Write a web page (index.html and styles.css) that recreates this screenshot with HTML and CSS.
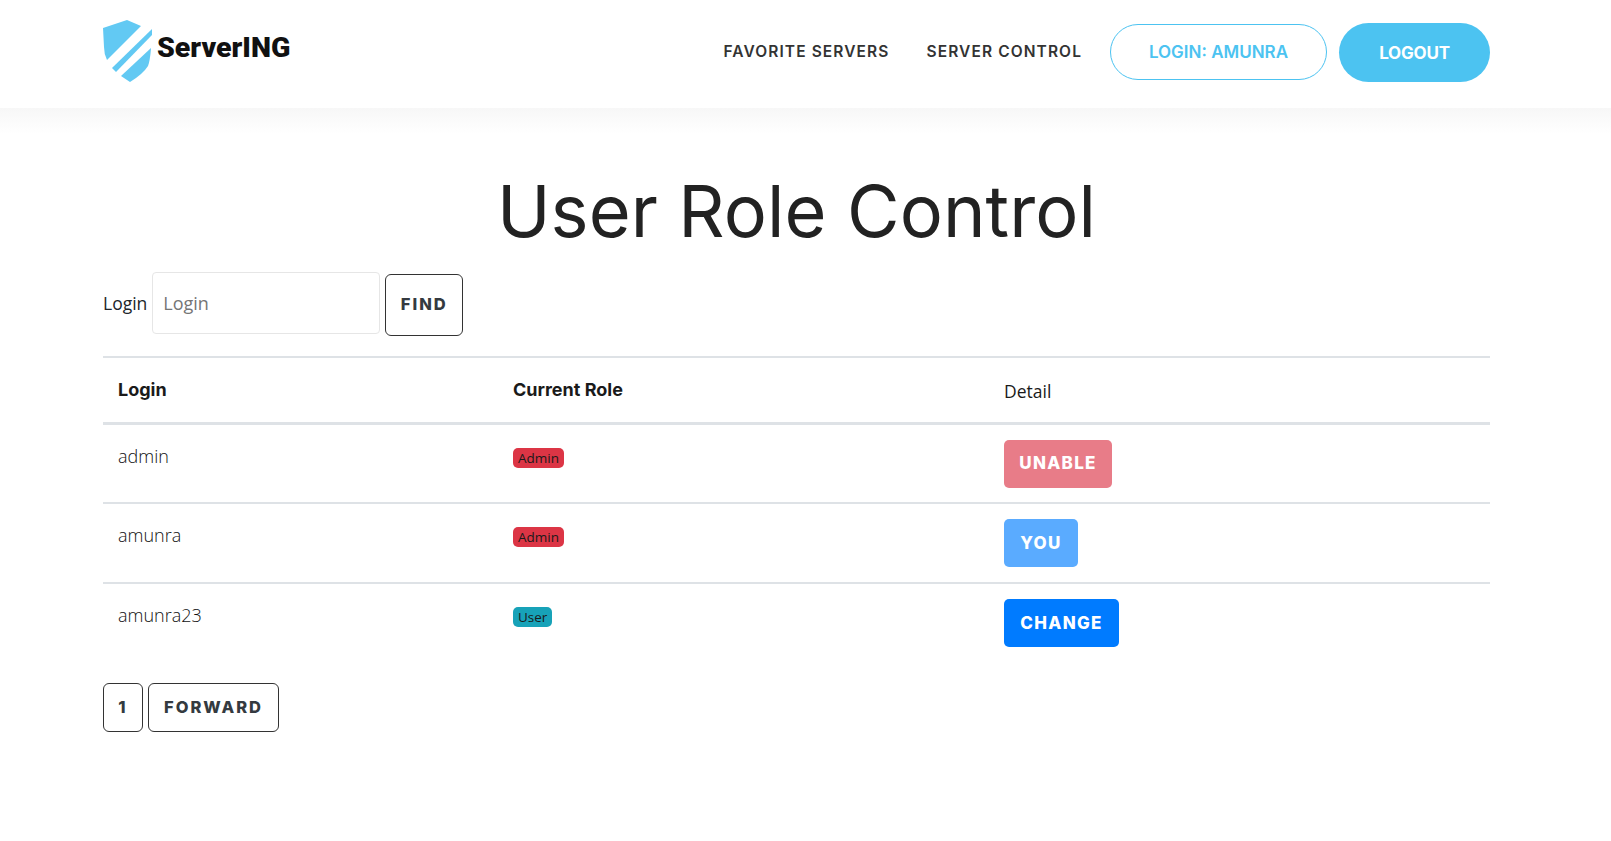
FILE: index.html
```html
<!DOCTYPE html>
<html lang="en">
<head>
<meta charset="utf-8">
<title>User Role Control</title>
<link rel="stylesheet" href="styles.css">
</head>
<body>
<header class="site-header">
  <div class="header-inner">
    <a class="brand" href="#">
      <svg class="brand-mark" viewBox="0 1 50 63" aria-hidden="true">
        <path d="M0 9 L24 1 L38 7 L4 41 Q1 35 1 28 Z"/>
        <path d="M49 10 L49 16 L13 53 L9 49 Z"/>
        <path d="M48 29 Q47 42 45 47 Q40 55 27 63 L18 57 Z"/>
      </svg>
      <span class="brand-name">ServerING</span>
    </a>
    <nav class="nav">
      <a class="nav-link" href="#">FAVORITE SERVERS</a>
      <a class="nav-link" href="#">SERVER CONTROL</a>
    </nav>
    <a class="pill pill-outline" href="#">LOGIN: AMUNRA</a>
    <a class="pill pill-solid" href="#">LOGOUT</a>
  </div>
</header>
<div class="band"></div>
<main class="content">
  <h1 class="title">User Role Control</h1>
  <form class="search">
    <label class="search-label" for="login">Login</label>
    <input class="search-input" id="login" type="text" placeholder="Login">
    <button class="btn-outline btn-find" type="button">FIND</button>
  </form>
  <table class="roles">
    <thead>
      <tr>
        <th class="col-login">Login</th>
        <th class="col-role">Current Role</th>
        <th class="col-detail">Detail</th>
      </tr>
    </thead>
    <tbody>
      <tr>
        <td>admin</td>
        <td><span class="badge badge-danger">Admin</span></td>
        <td><button class="btn btn-unable" type="button">UNABLE</button></td>
      </tr>
      <tr>
        <td>amunra</td>
        <td><span class="badge badge-danger">Admin</span></td>
        <td><button class="btn btn-you" type="button">YOU</button></td>
      </tr>
      <tr>
        <td>amunra23</td>
        <td><span class="badge badge-info">User</span></td>
        <td><button class="btn btn-change" type="button">CHANGE</button></td>
      </tr>
    </tbody>
  </table>
  <div class="pager">
    <button class="btn-outline btn-page" type="button">1</button>
    <button class="btn-outline btn-forward" type="button">FORWARD</button>
  </div>
</main>
</body>
</html>
```
FILE: styles.css
```css
* { box-sizing: border-box; }
html, body { margin: 0; padding: 0; }
body {
  background: #fff;
  color: #212529;
  font-family: "Open Sans", "Liberation Sans", sans-serif;
  font-size: 18px;
}
a { text-decoration: none; color: inherit; }

.site-header { height: 108px; background: #fff; }
.header-inner {
  display: flex;
  align-items: center;
  height: 105px;
  padding: 0 121px 0 103px;
}
.brand { display: flex; align-items: center; margin-right: auto; }
.brand-mark { width: 50px; height: 63px; margin-bottom: 2px; fill: #62c9f3; display: block; }
.brand-name {
  font-family: "Roboto", sans-serif;
  font-weight: 900;
  font-size: 28.5px;
  color: #111;
  margin-left: 4px;
  margin-top: -10px;
  white-space: nowrap;
}
.nav { display: flex; gap: 37px; margin-right: 28px; }
.nav-link {
  font-family: "Inter", sans-serif;
  font-weight: 600;
  font-size: 15.5px;
  letter-spacing: 1.1px;
  color: #333;
  position: relative;
  top: -1px;
}
.pill {
  display: flex;
  align-items: center;
  justify-content: center;
  font-family: "Inter", sans-serif;
  font-weight: 600;
  font-size: 17px;
  border-radius: 28px;
}
.pill-outline {
  width: 217px;
  height: 56px;
  border: 1px solid #4cc3f1;
  color: #4cc3f1;
  margin: -1px 12px 0 0;
}
.pill-solid {
  width: 151px;
  height: 59px;
  background: #4cc3f1;
  color: #fff;
  border-radius: 30px;
  font-weight: 700;
  letter-spacing: -0.2px;
}

.band { height: 26px; background: linear-gradient(#f7f7f7, #fff); }

.content { padding: 0 121px 0 103px; }
.title {
  margin: 0;
  padding-top: 35px;
  height: 138px;
  text-align: center;
  font-family: "Inter", sans-serif;
  font-weight: 400;
  font-size: 72px;
  line-height: 84px;
  letter-spacing: 0.1px;
  color: #222;
}

.search { display: flex; align-items: flex-start; }
.search-label { line-height: 62px; margin-right: 5px; color: #212529; font-size: 17.5px; font-weight: 500; }
.search-input {
  width: 228px;
  height: 62px;
  padding: 0 10px;
  border: 1px solid #e6e6e6;
  border-radius: 4px;
  background: #fff;
  font: inherit;
  color: #333;
}
.search-input::placeholder { color: #757575; opacity: 1; }

.btn-outline {
  height: 62px;
  padding: 0 0 1px;
  background: #fff;
  border: 1px solid #333;
  border-radius: 6px;
  font-family: "Inter", sans-serif;
  font-weight: 800;
  font-size: 16.5px;
  letter-spacing: 2px;
  color: #343a40;
}
.btn-find { width: 78px; margin: 2px 0 0 5px; padding-bottom: 3px; }

.roles {
  width: 100%;
  margin-top: 20px;
  border-collapse: collapse;
  table-layout: fixed;
  border-top: 2px solid #dee2e6;
}
.roles th, .roles td {
  padding: 0 15px;
  text-align: left;
  vertical-align: top;
}
.col-login { width: 395px; }
.col-role { width: 491px; }
.roles th {
  height: 66px;
  border-bottom: 3px solid #dee2e6;
  font-family: "Inter", sans-serif;
  font-weight: 700;
  font-size: 18px;
  color: #1a1a1a;
  padding-top: 21px;
}
.roles th.col-detail {
  font-family: "Open Sans", sans-serif;
  font-weight: 400;
  font-size: 17.5px;
  padding-top: 21px;
}
.roles td {
  height: 80px;
  padding-top: 15px;
  border-top: 2px solid #dee2e6;
  font-weight: 300;
  font-size: 18px;
  line-height: 33px;
  color: #111;
}
.roles thead + tbody tr:first-child td { border-top: 0; }
.badge {
  display: inline-block;
  height: 20px;
  padding: 0 5px;
  margin-top: 8px;
  border-radius: 5px;
  font-size: 13.5px;
  font-weight: 400;
  line-height: 20px;
  color: #1a1a1a;
  vertical-align: top;
}
.badge-danger { background: #dc3545; }
.badge-info { background: #17a2b8; }

.btn {
  display: block;
  height: 48px;
  padding: 0 0 1px;
  border: 0;
  border-radius: 5px;
  font-family: "Inter", sans-serif;
  font-weight: 800;
  font-size: 17px;
  letter-spacing: 1.3px;
  color: #fff;
}
.btn-unable { width: 108px; background: #e87c88; }
.btn-you { width: 74px; background: #5aabff; }
.btn-change { width: 115px; background: #007bff; }

.pager { display: flex; gap: 5px; margin-top: 20px; }
.btn-page { width: 40px; height: 49px; }
.btn-forward { width: 131px; height: 49px; }
```
